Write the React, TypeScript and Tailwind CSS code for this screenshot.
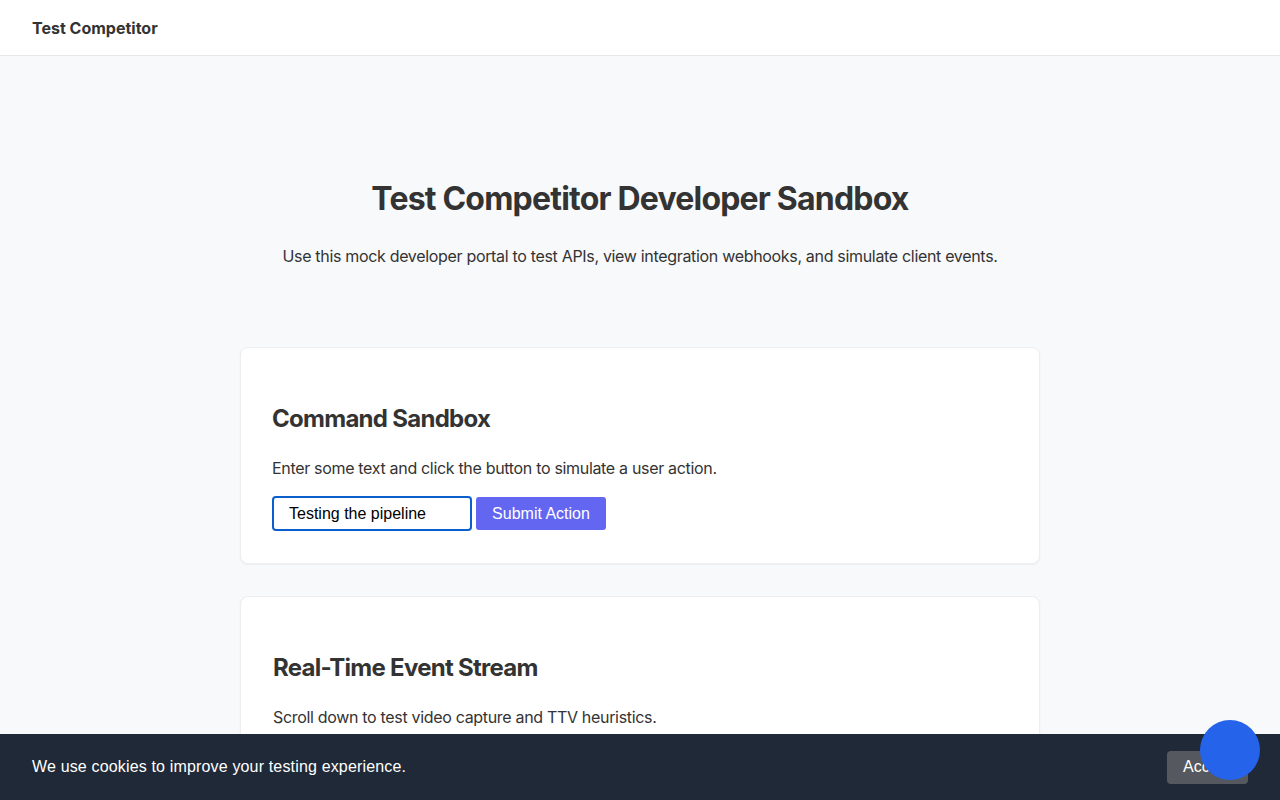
import React from "react";

export default function App() {
  return (
    <div className="min-h-screen bg-[#f8f9fb] text-[#333333]" style={{ fontFamily: "Inter, 'Noto Sans', sans-serif" }}>
      <header className="h-14 bg-white border-b border-[#e5e7eb] px-8 flex items-center">
        <span className="text-base font-bold text-[#333333]">Test Competitor</span>
      </header>
      <main className="flex flex-col items-center pb-40">
        <section className="pt-[124px] pb-[79px] text-center">
          <h1 className="text-[32px] leading-[38px] font-bold tracking-[-0.025em] text-[#333333]">
            Test Competitor Developer Sandbox
          </h1>
          <p className="mt-[26px] text-base leading-6 tracking-[-0.02em] text-[#333333]">
            Use this mock developer portal to test APIs, view integration webhooks, and simulate client events.
          </p>
        </section>
        <div className="w-[800px] flex flex-col gap-[32px]">
          <div className="bg-white border border-[#eceef1] rounded-lg shadow-[0_1px_2px_rgba(0,0,0,0.05)] px-[31px] pt-[56px] pb-[32px]">
            <h2 className="text-2xl leading-[30px] font-bold tracking-[-0.03em] text-[#333333]">Command Sandbox</h2>
            <p className="mt-[22px] text-base leading-6 tracking-[-0.02em]">Enter some text and click the button to simulate a user action.</p>
            <div className="mt-[16px] flex items-center gap-1" style={{ fontFamily: "'Liberation Sans', Arial, sans-serif" }}>
              <input
                defaultValue="Testing the pipeline"
                className="w-[200px] h-[35px] border-2 border-[#0b5fcc] rounded-[4px] px-[15px] text-base text-black bg-white outline-none"
              />
              <button className="w-[130px] h-[33px] bg-[#6366f1] text-white text-base rounded-[3px]">Submit Action</button>
            </div>
          </div>
          <div className="bg-white border border-[#eceef1] rounded-lg shadow-[0_1px_2px_rgba(0,0,0,0.05)] px-8 pt-[56px] pb-8">
            <h2 className="text-2xl leading-[30px] font-bold tracking-[-0.03em] text-[#333333]">Real-Time Event Stream</h2>
            <p className="mt-[22px] text-base leading-6 tracking-[-0.02em]">Scroll down to test video capture and TTV heuristics.</p>
            <div className="h-[200px]" />
          </div>
        </div>
      </main>
      <div
        className="fixed left-0 right-0 bottom-0 h-[66px] bg-[#1f2937] px-8 flex items-center justify-between"
        style={{ fontFamily: "'Liberation Sans', Arial, sans-serif" }}
      >
        <span className="text-white text-base tracking-[0.01em]">We use cookies to improve your testing experience.</span>
        <button className="w-[81px] h-[33px] bg-[#55595f] text-white text-base rounded-[4px] text-left pl-4">Accept</button>
      </div>
      <div className="fixed right-5 bottom-5 w-[60px] h-[60px] rounded-full bg-[#2563eb]" />
    </div>
  );
}
